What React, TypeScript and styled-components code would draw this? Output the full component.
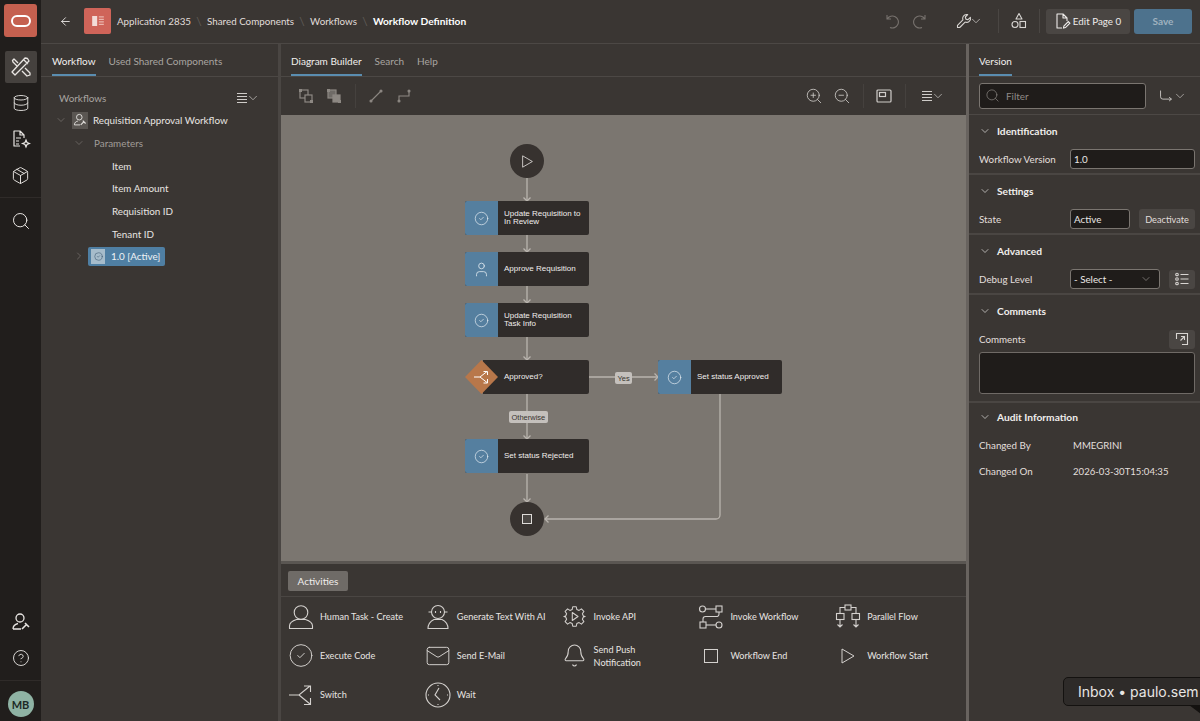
import React from 'react';
import styled, { createGlobalStyle } from 'styled-components';
import {
  ArrowLeft,
  Bell,
  ChevronDown,
  ChevronRight,
  CircleCheck,
  CircleHelp,
  Database,
  Mail,
  Package,
  Search,
  User,
  ZoomIn,
  ZoomOut,
} from 'lucide-react';

const GlobalStyle = createGlobalStyle`
  html, body { margin: 0; padding: 0; background: #3a3633; }
  body { font-family: Lato, "Noto Sans", "Liberation Sans", sans-serif; color: #e8e5e2; }
  * { box-sizing: border-box; }
`;

const MenuLines = ({ size = 14 }: { size?: number }) => (
  <svg width={size} height={size} viewBox="0 0 14 14" fill="none" stroke="currentColor" strokeWidth="1.1">
    <path d="M2 2.5h10M2 5.5h10M2 8.5h10M2 11.5h10" />
  </svg>
);

const ToolsIcon = () => (
  <svg width="22" height="22" viewBox="0 0 22 22" fill="none" stroke="currentColor" strokeWidth="1.3">
    <path d="M3 17l2 2 14-14-1.5-2.5L15 2 2 16z M14 4l4 4" strokeLinejoin="round" />
    <path d="M8 7L4 3 2.5 4.5 3 6l4 4M12 15l5 5 3-1 0-2-5-5" strokeLinejoin="round" />
  </svg>
);

const FileSpark = () => (
  <svg width="20" height="20" viewBox="0 0 20 20" fill="none" stroke="currentColor" strokeWidth="1.2">
    <path d="M9 17H3V2h6l4 4v3M9 2v4h4M5 9h5M5 12h3M5 15h3" strokeLinejoin="round" />
    <path d="M15 11l1 2.500 2.500 1-2.500 1-1 2.500-1-2.500-2.500-1 2.500-1z" />
  </svg>
);

const UserWrench = ({ size = 20 }: { size?: number }) => (
  <svg width={size} height={size} viewBox="0 0 20 20" fill="none" stroke="currentColor" strokeWidth="1.3">
    <circle cx="9" cy="6" r="4" />
    <path d="M2 17c0-4 3-5 5-5.5M2 17h8" />
    <path d="M11 17l5-5M14 11l4 4" strokeWidth="1.6" />
  </svg>
);

const OracleMark = () => (
  <svg width="20" height="12" viewBox="0 0 20 12" fill="none" stroke="#fff" strokeWidth="2">
    <rect x="1" y="1" width="18" height="10" rx="5" />
  </svg>
);

const AppGlyph = () => (
  <svg width="12" height="10" viewBox="0 0 14 12">
    <rect x="0" y="0" width="6" height="12" fill="#f3dcd8" />
    <path d="M8 1h6M8 4h6M8 7h6M8 10h6" stroke="#eab5ad" strokeWidth="1.6" />
  </svg>
);

const UndoArc = ({ flip }: { flip?: boolean }) => (
  <svg width="16" height="16" viewBox="0 0 16 16" fill="none" stroke="currentColor" strokeWidth="1.1"
    style={flip ? { transform: 'scaleX(-1)' } : undefined}>
    <path d="M3 2v4h4M3.2 6A6 6 0 1 1 6 14.5" />
  </svg>
);

const WrenchGlyph = () => (
  <svg width="16" height="16" viewBox="0 0 16 16" fill="none" stroke="currentColor" strokeWidth="1.1">
    <path d="M10.5 1.5a4 4 0 0 0-3.6 5.4L1.5 12.3v2.2h2.2l5.4-5.4a4 4 0 0 0 5.3-4.8l-2.4 2.4-2.1-.6-.6-2.1 2.4-2.4z" strokeLinejoin="round" />
  </svg>
);

const ShapesGlyph = () => (
  <svg width="16" height="18" viewBox="0 0 16 18" fill="none" stroke="currentColor" strokeWidth="1.1">
    <path d="M8 1.5L11 7H5z" strokeLinejoin="round" />
    <circle cx="4" cy="12.5" r="3" />
    <rect x="9" y="9.5" width="5.5" height="6" />
  </svg>
);

const FilePencil = () => (
  <svg width="16" height="18" viewBox="0 0 16 18" fill="none" stroke="currentColor" strokeWidth="1.1">
    <path d="M7 16H2V2h6l4 4v3M8 2v4h4" strokeLinejoin="round" />
    <path d="M8.5 16l.4-2 4.4-4.4 1.6 1.6-4.4 4.4z" />
  </svg>
);

const SelectBoth = ({ filled }: { filled?: boolean }) => (
  <svg width="16" height="16" viewBox="0 0 16 16" fill="none" stroke="currentColor" strokeWidth="1.2">
    <rect x="2" y="2" width="8" height="8" fill={filled ? '#6f6b67' : 'none'} />
    <rect x="7" y="7" width="7" height="7" fill={filled ? '#8d8883' : '#3a3633'} />
    <rect x="1" y="1" width="3" height="3" fill="#8d8883" stroke="none" />
    <rect x="12" y="12" width="3" height="3" fill="#8d8883" stroke="none" />
  </svg>
);

const LineStraight = () => (
  <svg width="16" height="16" viewBox="0 0 16 16" fill="none" stroke="currentColor" strokeWidth="1.1">
    <path d="M3 13L13 3" />
    <circle cx="3" cy="13" r="1" fill="currentColor" />
    <circle cx="13" cy="3" r="1" fill="currentColor" />
  </svg>
);

const LineElbow = () => (
  <svg width="16" height="16" viewBox="0 0 16 16" fill="none" stroke="currentColor" strokeWidth="1.1">
    <path d="M3 13V8h10V3" />
    <circle cx="3" cy="13" r="1" fill="currentColor" />
    <circle cx="13" cy="3" r="1" fill="currentColor" />
  </svg>
);

const Overview = () => (
  <svg width="16" height="14" viewBox="0 0 16 14" fill="none" stroke="currentColor" strokeWidth="1.2">
    <rect x="1" y="1" width="14" height="12" rx="1" />
    <rect x="3.5" y="3.5" width="6" height="4" />
  </svg>
);

const RouteGlyph = () => (
  <svg width="14" height="14" viewBox="0 0 18 16" fill="none" stroke="currentColor" strokeWidth="1.2">
    <path d="M2 1v8a3 3 0 0 0 3 3h11M13 9.500l3 2.500-3 2.500" />
  </svg>
);

const SwitchGlyph = ({ size = 26 }: { size?: number }) => (
  <svg width={size} height={size} viewBox="0 0 26 26" fill="none" stroke="currentColor" strokeWidth="1.1">
    <path d="M1 13h10l11-9M11 13l11 9M16 4h6.500v6M22.500 16v6.500H16" />
  </svg>
);

const PersonGlyph = () => (
  <svg width="26" height="26" viewBox="0 0 26 26" fill="none" stroke="currentColor" strokeWidth="1.1">
    <circle cx="13" cy="8.500" r="6.800" />
    <path d="M1.500 24.500v-2.500c0-3.500 4-5.500 7-6.500h9c3 1 7 3 7 6.500v2.500z" strokeLinejoin="round" />
  </svg>
);

const RobotGlyph = () => (
  <svg width="26" height="26" viewBox="0 0 26 26" fill="none" stroke="currentColor" strokeWidth="1.1">
    <circle cx="13" cy="8" r="6.500" />
    <path d="M3.500 8h3M19.500 8h3M10.500 7v2M15.500 7v2" />
    <path d="M3 24.500c0-5 4-8 6-9h8c2 1 6 4 6 9z" strokeLinejoin="round" />
  </svg>
);

const GearPlay = () => (
  <svg width="23" height="23" viewBox="0 0 26 26" fill="none" stroke="currentColor" strokeWidth="1.2">
    <path d="M11 2h4l.6 3 2.600 1.100 2.600-1.700 2.800 2.800-1.700 2.600L23 12.400l2 .6v0l-2 .6-1.100 2.600 1.700 2.600-2.800 2.800-2.600-1.700-2.600 1.100L15 24h-4l-.6-3-2.600-1.100-2.600 1.700-2.800-2.800 1.700-2.600L3 13.600 1 13l2-.6 1.100-2.600-1.700-2.600 2.800-2.800 2.600 1.700 2.600-1.100z" strokeLinejoin="round" />
    <path d="M10.500 8.500l6.500 4.500-6.500 4.500z" strokeLinejoin="round" />
  </svg>
);

const InvokeFlow = () => (
  <svg width="26" height="26" viewBox="0 0 26 26" fill="none" stroke="currentColor" strokeWidth="1.1">
    <circle cx="4.500" cy="5" r="3" />
    <path d="M7.500 5H18" />
    <rect x="18" y="2" width="6" height="6" />
    <path d="M21 8v2a2.500 2.500 0 0 1-2.500 2.500H7.500A2.500 2.500 0 0 0 5 15v3" />
    <rect x="2" y="18" width="6" height="6" />
    <path d="M8 21h10" />
    <circle cx="21" cy="21" r="3" />
  </svg>
);

const ParallelFlow = () => (
  <svg width="26" height="26" viewBox="0 0 26 26" fill="none" stroke="currentColor" strokeWidth="1.1">
    <rect x="10" y="1" width="6" height="5" />
    <path d="M10 3.500H5v6M16 3.500h5v6" />
    <rect x="1.500" y="9.500" width="7.500" height="6" />
    <rect x="17" y="9.500" width="7.500" height="6" />
    <path d="M5 15.500V23M2.500 20.500L5 23l2.500-2.500M21 15.500V23M18.500 20.500L21 23l2.500-2.500" />
  </svg>
);

const ClockGlyph = () => (
  <svg width="26" height="26" viewBox="0 0 26 26" fill="none" stroke="currentColor" strokeWidth="1.1">
    <circle cx="13" cy="13" r="12" />
    <path d="M14 6l-4 7 5 5" />
    <path d="M13 3v1M13 22v1M3 13h1M22 13h1" />
  </svg>
);

const ExpandBox = () => (
  <svg width="14" height="14" viewBox="0 0 14 14" fill="none" stroke="currentColor" strokeWidth="1.1">
    <path d="M1.500 7V1.500h11v11H7M5.500 8.500l4-4M6 4.500h3.500V8" />
  </svg>
);

const ListLines = () => (
  <svg width="14" height="14" viewBox="0 0 14 14" fill="none" stroke="currentColor" strokeWidth="1.1">
    <circle cx="2" cy="2.500" r="1.300" />
    <circle cx="2" cy="7" r="1.300" />
    <circle cx="2" cy="11.500" r="1.300" />
    <path d="M5.500 2.500h8M5.500 7h8M5.500 11.500h8" />
  </svg>
);

const NodeDecision = () => (
  <svg width="16" height="14" viewBox="0 0 16 14" fill="none" stroke="#fff" strokeWidth="1">
    <path d="M0 7h6l7-5.500M6 7l7 5.500M9.500 1.500h4v3.500M13.500 9v4h-4" />
  </svg>
);

function Square14() {
  return (
    <svg width="14" height="14" viewBox="0 0 14 14" fill="none" stroke="currentColor" strokeWidth="1">
      <rect x="0.500" y="0.500" width="13" height="13" />
    </svg>
  );
}

function PlayOutline({ size }: { size: number }) {
  return (
    <svg width={size} height={size} viewBox="0 0 14 16" fill="none" stroke="currentColor" strokeWidth="1">
      <path d="M1 1l12 7-12 7z" strokeLinejoin="round" />
    </svg>
  );
}

const activities: { icon: React.ReactNode; label: React.ReactNode }[] = [
  { icon: <PersonGlyph />, label: 'Human Task - Create' },
  { icon: <RobotGlyph />, label: 'Generate Text With AI' },
  { icon: <GearPlay />, label: 'Invoke API' },
  { icon: <InvokeFlow />, label: 'Invoke Workflow' },
  { icon: <ParallelFlow />, label: 'Parallel Flow' },
  { icon: <CircleCheck size={27} strokeWidth={0.9} />, label: 'Execute Code' },
  { icon: <Mail size={28} strokeWidth={0.9} />, label: 'Send E-Mail' },
  { icon: <Bell size={25} strokeWidth={1} />, label: <>Send Push<br />Notification</> },
  { icon: <Square14 />, label: 'Workflow End' },
  { icon: <PlayOutline size={16} />, label: 'Workflow Start' },
  { icon: <SwitchGlyph />, label: 'Switch' },
  { icon: <ClockGlyph />, label: 'Wait' },
];

const Arrow = ({ x, y, dir }: { x: number; y: number; dir: 'down' | 'right' | 'left' }) => {
  const d =
    dir === 'down'
      ? `M${x - 3.500} ${y - 3.500}L${x} ${y}L${x + 3.500} ${y - 3.500}`
      : dir === 'right'
        ? `M${x - 3.500} ${y - 3.500}L${x} ${y}L${x - 3.500} ${y + 3.500}`
        : `M${x + 3.500} ${y - 3.500}L${x} ${y}L${x + 3.500} ${y + 3.500}`;
  return <path d={d} />;
};

export default function App() {
  return (
    <>
      <GlobalStyle />
      <Page>
        <Rail>
          <LogoBox><OracleMark /></LogoBox>
          <RailActive><ToolsIcon /></RailActive>
          <RailGroup>
            <RailIcon><Database size={18} strokeWidth={1.2} /></RailIcon>
            <RailIcon><FileSpark /></RailIcon>
            <RailIcon><Package size={19} strokeWidth={1.2} /></RailIcon>
          </RailGroup>
          <RailLine />
          <RailSearch><Search size={20} strokeWidth={1.2} /></RailSearch>
          <RailBottom>
            <RailIcon><UserWrench /></RailIcon>
            <RailIcon><CircleHelp size={18} strokeWidth={1.2} /></RailIcon>
            <RailLine />
            <Avatar>MB</Avatar>
          </RailBottom>
        </Rail>

        <Main>
          <TopBar>
            <BackButton><ArrowLeft size={13} strokeWidth={1.6} /></BackButton>
            <AppBadge><AppGlyph /></AppBadge>
            <Crumb>Application 2835</Crumb>
            <CrumbSlash>\</CrumbSlash>
            <Crumb>Shared Components</Crumb>
            <CrumbSlash>\</CrumbSlash>
            <Crumb>Workflows</Crumb>
            <CrumbSlash>\</CrumbSlash>
            <Crumb $current>Workflow Definition</Crumb>
            <TopActions>
              <DimIcon><UndoArc /></DimIcon>
              <DimIcon><UndoArc flip /></DimIcon>
              <WrenchMenu><WrenchGlyph /><ChevronDown size={14} strokeWidth={1.2} /></WrenchMenu>
              <TopDivider />
              <ShapesSlot><ShapesGlyph /></ShapesSlot>
              <TopDivider />
              <EditButton><FilePencil />Edit Page 0</EditButton>
              <SaveButton>Save</SaveButton>
            </TopActions>
          </TopBar>

          <Workspace>
            <LeftPanel>
              <LeftTabs>
                <Tab $active>Workflow</Tab>
                <Tab>Used Shared Components</Tab>
              </LeftTabs>
              <Tree>
                <TreeHead>
                  <span>Workflows</span>
                  <TreeMenu><MenuLines /><ChevronDown size={14} strokeWidth={1.2} /></TreeMenu>
                </TreeHead>
                <TreeRow $indent={14}>
                  <Twist $w={17}><ChevronDown size={12} strokeWidth={1.1} /></Twist>
                  <TreeBadge><UserWrench size={14} /></TreeBadge>
                  <TreeText>Requisition Approval Workflow</TreeText>
                </TreeRow>
                <TreeRow $indent={32}>
                  <Twist $w={21}><ChevronDown size={12} strokeWidth={1.1} /></Twist>
                  <TreeText $muted>Parameters</TreeText>
                </TreeRow>
                <TreeRow $indent={71}><TreeText>Item</TreeText></TreeRow>
                <TreeRow $indent={71}><TreeText>Item Amount</TreeText></TreeRow>
                <TreeRow $indent={71}><TreeText>Requisition ID</TreeText></TreeRow>
                <TreeRow $indent={71}><TreeText>Tenant ID</TreeText></TreeRow>
                <TreeRow $indent={32}>
                  <Twist $w={15}><ChevronRight size={12} strokeWidth={1.1} /></Twist>
                  <SelectedPill>
                    <PillIcon><CircleCheck size={9} strokeWidth={1.4} /></PillIcon>
                    1.0 [Active]
                  </SelectedPill>
                </TreeRow>
              </Tree>
            </LeftPanel>

            <Splitter />

            <Center>
              <TabRow>
                <Tab $active>Diagram Builder</Tab>
                <Tab>Search</Tab>
                <Tab>Help</Tab>
              </TabRow>
              <Toolbar>
                <ToolGroup>
                  <ToolIcon><SelectBoth /></ToolIcon>
                  <ToolIcon><SelectBoth filled /></ToolIcon>
                </ToolGroup>
                <ToolDivider />
                <ToolGroup>
                  <ToolIcon><LineStraight /></ToolIcon>
                  <ToolIcon><LineElbow /></ToolIcon>
                </ToolGroup>
                <ToolSpacer />
                <ToolGroup>
                  <ToolIcon $bright><ZoomIn size={18} strokeWidth={1.1} /></ToolIcon>
                  <ToolIcon $bright><ZoomOut size={18} strokeWidth={1.1} /></ToolIcon>
                </ToolGroup>
                <ToolDivider />
                <ToolIcon $bright><Overview /></ToolIcon>
                <ToolDivider />
                <ToolMenu><MenuLines /><ChevronDown size={14} strokeWidth={1.2} /></ToolMenu>
              </Toolbar>

              <Canvas>
                <Wires viewBox="281 115 685 446" fill="none" stroke="#b9b4ae" strokeWidth="1.300">
                  <path d="M527 178V201M527 235V252M527 286V303M527 337V360M527 394V439M527 474V502" />
                  <Arrow x={527} y={201} dir="down" />
                  <Arrow x={527} y={252} dir="down" />
                  <Arrow x={527} y={303} dir="down" />
                  <Arrow x={527} y={360} dir="down" />
                  <Arrow x={527} y={439} dir="down" />
                  <Arrow x={527} y={502} dir="down" />
                  <path d="M589 377H658" />
                  <Arrow x={658} y={377} dir="right" />
                  <path d="M720 394V515a4 4 0 0 1-4 4H545" />
                  <Arrow x={545} y={519} dir="left" />
                </Wires>

                <Terminal $x={229} $y={29}><PlayOutline size={13} /></Terminal>
                <Terminal $x={229} $y={387}><TerminalStop /></Terminal>

                <Node $x={184} $y={86}>
                  <NodeIcon><CircleCheck size={15} strokeWidth={1.1} /></NodeIcon>
                  <NodeLabel>Update Requisition to<br />In Review</NodeLabel>
                </Node>
                <Node $x={184} $y={137}>
                  <NodeIcon><User size={17} strokeWidth={1.1} /></NodeIcon>
                  <NodeLabel>Approve Requisition</NodeLabel>
                </Node>
                <Node $x={184} $y={188}>
                  <NodeIcon><CircleCheck size={15} strokeWidth={1.1} /></NodeIcon>
                  <NodeLabel>Update Requisition<br />Task Info</NodeLabel>
                </Node>
                <Node $x={184} $y={245} $decision>
                  <DecisionIcon><NodeDecision /></DecisionIcon>
                  <NodeLabel>Approved?</NodeLabel>
                </Node>
                <Node $x={377} $y={245}>
                  <NodeIcon><CircleCheck size={15} strokeWidth={1.1} /></NodeIcon>
                  <NodeLabel>Set status Approved</NodeLabel>
                </Node>
                <Node $x={184} $y={324}>
                  <NodeIcon><CircleCheck size={15} strokeWidth={1.1} /></NodeIcon>
                  <NodeLabel>Set status Rejected</NodeLabel>
                </Node>

                <EdgeLabel $x={334} $y={257}>Yes</EdgeLabel>
                <EdgeLabel $x={228} $y={296}>Otherwise</EdgeLabel>
              </Canvas>

              <Palette>
                <PaletteTabs><PaletteTab>Activities</PaletteTab></PaletteTabs>
                <PaletteGrid>
                  {activities.map((a, i) => (
                    <Activity key={i}>
                      <ActivityIcon>{a.icon}</ActivityIcon>
                      <ActivityLabel>{a.label}</ActivityLabel>
                    </Activity>
                  ))}
                </PaletteGrid>
              </Palette>
            </Center>

            <SplitterLight />

            <RightPanel>
              <TabRow>
                <Tab $active>Version</Tab>
              </TabRow>
              <FilterRow>
                <FilterBox>
                  <Search size={15} strokeWidth={1.1} />
                  <span>Filter</span>
                </FilterBox>
                <RouteMenu><RouteGlyph /><ChevronDown size={14} strokeWidth={1.2} /></RouteMenu>
              </FilterRow>

              <Section>
                <SectionHead><ChevronDown size={12} strokeWidth={1.3} />Identification</SectionHead>
                <PropRow>
                  <PropLabel>Workflow Version</PropLabel>
                  <Field $grow>1.0</Field>
                </PropRow>
              </Section>
              <Section>
                <SectionHead><ChevronDown size={12} strokeWidth={1.3} />Settings</SectionHead>
                <PropRow>
                  <PropLabel>State</PropLabel>
                  <Field $w={60}>Active</Field>
                  <GhostButton>Deactivate</GhostButton>
                </PropRow>
              </Section>
              <Section>
                <SectionHead><ChevronDown size={12} strokeWidth={1.3} />Advanced</SectionHead>
                <PropRow>
                  <PropLabel>Debug Level</PropLabel>
                  <Field $w={90}>- Select -<FieldChevron><ChevronDown size={12} strokeWidth={1.2} /></FieldChevron></Field>
                  <SquareButton><ListLines /></SquareButton>
                </PropRow>
              </Section>
              <CommentsSection>
                <SectionHead><ChevronDown size={12} strokeWidth={1.3} />Comments</SectionHead>
                <CommentHead>
                  <PropLabel>Comments</PropLabel>
                  <SquareButton><ExpandBox /></SquareButton>
                </CommentHead>
                <CommentBox />
              </CommentsSection>
              <AuditSection>
                <SectionHead><ChevronDown size={12} strokeWidth={1.3} />Audit Information</SectionHead>
                <AuditRow><PropLabel>Changed By</PropLabel><AuditValue>MMEGRINI</AuditValue></AuditRow>
                <AuditRow><PropLabel>Changed On</PropLabel><AuditValue>2026-03-30T15:04:35</AuditValue></AuditRow>
              </AuditSection>
            </RightPanel>
          </Workspace>
        </Main>

        <InboxTip>Inbox • paulo.sem</InboxTip>
      </Page>
    </>
  );
}

const Page = styled.div`
  position: relative;
  display: flex;
  width: 1200px;
  height: 721px;
  overflow: hidden;
  background: #3a3633;
  font-size: 9.900px;
`;

const Rail = styled.div`
  width: 41px;
  flex: none;
  display: flex;
  flex-direction: column;
  align-items: center;
  background: #211e1c;
  color: #e8e5e2;
  padding-top: 4px;
`;

const LogoBox = styled.div`
  width: 33px;
  height: 33px;
  border-radius: 3px;
  display: flex;
  align-items: center;
  justify-content: center;
  background: #c5604f;
`;

const RailActive = styled.div`
  width: 32px;
  height: 32px;
  margin-top: 14px;
  border-radius: 2px;
  display: flex;
  align-items: center;
  justify-content: center;
  background: #45413e;
`;

const RailGroup = styled.div`
  display: flex;
  flex-direction: column;
  margin-top: 2px;
`;

const RailIcon = styled.div`
  width: 36px;
  height: 36px;
  display: flex;
  align-items: center;
  justify-content: center;
`;

const RailLine = styled.div`
  width: 100%;
  height: 1px;
  margin-top: 4px;
  background: #2f2b29;
`;

const RailSearch = styled(RailIcon)`
  margin-top: 5px;
`;

const RailBottom = styled.div`
  margin-top: auto;
  width: 100%;
  display: flex;
  flex-direction: column;
  align-items: center;
  padding-bottom: 4px;
`;

const Avatar = styled.div`
  width: 26px;
  height: 26px;
  margin-top: 10px;
  border-radius: 50%;
  display: flex;
  align-items: center;
  justify-content: center;
  background: #8fb3a4;
  color: #1d2a26;
  font-size: 11px;
  font-weight: 700;
`;

const Main = styled.div`
  flex: 1;
  min-width: 0;
  display: flex;
  flex-direction: column;
`;

const TopBar = styled.div`
  height: 44px;
  flex: none;
  display: flex;
  align-items: center;
  padding: 0 8px 1px 18px;
  border-bottom: 1px solid #4c4845;
  background: #3a3633;
`;

const BackButton = styled.div`
  width: 13px;
  display: flex;
  color: #f0eeec;
`;

const AppBadge = styled.div`
  width: 27px;
  height: 26px;
  margin: 0 6px 0 12px;
  border-radius: 2px;
  display: flex;
  align-items: center;
  justify-content: center;
  background: #cf6459;
`;

const Crumb = styled.span<{ $current?: boolean }>`
  font-size: ${({ $current }) => ($current ? '10.200px' : '9.800px')};
  color: ${({ $current }) => ($current ? '#fff' : '#e0ddda')};
  font-weight: ${({ $current }) => ($current ? 700 : 400)};
`;

const CrumbSlash = styled.span`
  width: 16px;
  text-align: center;
  color: #5f5b57;
  font-size: 12px;
`;

const TopActions = styled.div`
  margin-left: auto;
  display: flex;
  align-items: center;
`;

const DimIcon = styled.div`
  width: 28px;
  display: flex;
  justify-content: center;
  color: #77726e;
`;

const WrenchMenu = styled.div`
  margin: 0 15px 0 22px;
  display: flex;
  align-items: center;
  color: #d8d5d2;
  & > svg:last-child { margin-left: -3px; }
`;

const TopDivider = styled.div`
  width: 1px;
  height: 24px;
  background: #4a4643;
`;

const ShapesSlot = styled.div`
  width: 40px;
  display: flex;
  justify-content: center;
  color: #d8d5d2;
`;

const EditButton = styled.div`
  width: 84px;
  height: 25px;
  margin-left: 6px;
  border-radius: 3px;
  display: flex;
  align-items: center;
  justify-content: center;
  gap: 2px;
  background: #4a4643;
  color: #eeecea;
  font-size: 9.800px;
`;

const SaveButton = styled.div`
  width: 58px;
  height: 25px;
  margin-left: 4px;
  border-radius: 3px;
  display: flex;
  align-items: center;
  justify-content: center;
  background: #4d728d;
  color: #9fb1bf;
  font-weight: 700;
  font-size: 10px;
`;

const Workspace = styled.div`
  flex: 1;
  min-height: 0;
  display: flex;
`;

const LeftPanel = styled.div`
  width: 237px;
  flex: none;
  display: flex;
  flex-direction: column;
`;

const Splitter = styled.div`
  width: 3px;
  flex: none;
  background: #4a4643;
`;

const SplitterLight = styled(Splitter)`
  background: #68635f;
`;

const TabRow = styled.div`
  height: 33px;
  flex: none;
  display: flex;
  gap: 13px;
  padding-left: 10px;
  border-bottom: 1px solid #4c4845;
`;

const LeftTabs = styled(TabRow)`
  padding-left: 11px;
`;

const Tab = styled.div<{ $active?: boolean }>`
  height: 32px;
  padding-top: 10px;
  line-height: 14px;
  font-size: 10px;
  color: ${({ $active }) => ($active ? '#f2f0ee' : '#a9a5a1')};
  border-bottom: 2px solid ${({ $active }) => ($active ? '#5a8db0' : 'transparent')};
`;

const Tree = styled.div`
  padding-top: 10px;
  display: flex;
  flex-direction: column;
`;

const TreeHead = styled.div`
  height: 22px;
  display: flex;
  align-items: center;
  justify-content: space-between;
  padding: 0 18px 0 18px;
  color: #a9a5a1;
`;

const TreeMenu = styled.div`
  display: flex;
  align-items: center;
  color: #cfccc9;
  & > svg:last-child { margin-left: -3px; }
`;

const TreeRow = styled.div<{ $indent: number }>`
  height: 22.700px;
  display: flex;
  align-items: center;
  padding-left: ${({ $indent }) => $indent}px;
`;

const Twist = styled.div<{ $w: number }>`
  width: ${({ $w }) => $w}px;
  flex: none;
  display: flex;
  color: #8b8682;
`;

const TreeBadge = styled.div`
  width: 16px;
  height: 17px;
  margin-right: 5px;
  display: flex;
  align-items: center;
  justify-content: center;
  background: #5a5652;
  color: #e6e3e0;
`;

const TreeText = styled.span<{ $muted?: boolean }>`
  color: ${({ $muted }) => ($muted ? '#a09c98' : '#e8e5e2')};
`;

const SelectedPill = styled.div`
  width: 77px;
  height: 19px;
  padding-left: 3px;
  border-radius: 2px;
  display: flex;
  align-items: center;
  gap: 6px;
  background: #4f7fa3;
  color: #f0f3f5;
`;

const PillIcon = styled.div`
  width: 14px;
  height: 15px;
  display: flex;
  align-items: center;
  justify-content: center;
  background: #a6bccb;
  color: #33506a;
`;

const Center = styled.div`
  width: 685px;
  flex: none;
  display: flex;
  flex-direction: column;
`;

const Toolbar = styled.div`
  height: 38px;
  flex: none;
  display: flex;
  align-items: center;
  padding: 0 21px 0 17px;
`;

const ToolGroup = styled.div`
  display: flex;
  gap: 12px;
`;

const ToolIcon = styled.div<{ $bright?: boolean }>`
  width: 16px;
  height: 16px;
  display: flex;
  align-items: center;
  justify-content: center;
  color: ${({ $bright }) => ($bright ? '#d0cdca' : '#8d8883')};
  & > svg { flex: none; }
`;

const ToolDivider = styled.div`
  width: 1px;
  height: 24px;
  margin: 0 12px 0 13px;
  background: #45413e;
`;

const ToolSpacer = styled.div`
  flex: 1;
`;

const ToolMenu = styled.div`
  margin-left: 2px;
  display: flex;
  align-items: center;
  color: #cfccc9;
  & > svg:last-child { margin-left: -3px; }
`;

const Canvas = styled.div`
  position: relative;
  height: 446px;
  flex: none;
  background: #7b7670;
  overflow: hidden;
`;

const Wires = styled.svg`
  position: absolute;
  inset: 0;
  width: 685px;
  height: 446px;
`;

const Terminal = styled.div<{ $x: number; $y: number }>`
  position: absolute;
  left: ${({ $x }) => $x}px;
  top: ${({ $y }) => $y}px;
  width: 34px;
  height: 34px;
  border-radius: 50%;
  display: flex;
  align-items: center;
  justify-content: center;
  background: #37322f;
  color: #e6e3e0;
`;

const TerminalStop = styled.div`
  width: 10px;
  height: 10px;
  border: 1px solid #dedbd8;
  background: #4a4643;
`;

const Node = styled.div<{ $x: number; $y: number; $decision?: boolean }>`
  position: absolute;
  left: ${({ $x }) => $x}px;
  top: ${({ $y }) => $y}px;
  width: 124px;
  height: 34px;
  display: flex;
  border-radius: 2px;
  background: ${({ $decision }) =>
    $decision ? 'linear-gradient(to right, transparent 18px, #302c2a 18px)' : '#302c2a'};
`;

const NodeIcon = styled.div`
  width: 33px;
  flex: none;
  display: flex;
  align-items: center;
  justify-content: center;
  background: #557f9f;
  color: #e6eef3;
  border-radius: 2px 0 0 2px;
`;

const DecisionIcon = styled(NodeIcon)`
  background: #b8774a;
  clip-path: polygon(50% 0, 100% 50%, 50% 100%, 0 50%);
  color: #fff;
  border-radius: 0;
`;

const NodeLabel = styled.div`
  padding-left: 6px;
  align-self: center;
  font-family: "Liberation Sans", Arial, sans-serif;
  font-size: 8px;
  line-height: 8px;
  color: #f0eeec;
`;

const EdgeLabel = styled.div<{ $x: number; $y: number }>`
  position: absolute;
  left: ${({ $x }) => $x}px;
  top: ${({ $y }) => $y}px;
  height: 12px;
  padding: 0 2.500px;
  border-radius: 2px;
  display: flex;
  align-items: center;
  background: #c4c0bc;
  color: #38342f;
  font-family: "Liberation Sans", Arial, sans-serif;
  font-size: 7.500px;
`;

const Palette = styled.div`
  flex: 1;
  min-height: 0;
  border-top: 3px solid #5a5652;
`;

const PaletteTabs = styled.div`
  height: 33px;
  padding: 7px 0 0 7px;
  border-bottom: 1px solid #4a4643;
`;

const PaletteTab = styled.div`
  width: 60px;
  height: 20px;
  border-radius: 2px;
  display: flex;
  align-items: center;
  justify-content: center;
  background: #6f6b67;
  color: #f0eeec;
  font-size: 10px;
`;

const PaletteGrid = styled.div`
  display: grid;
  grid-template-columns: repeat(5, 136.800px);
  grid-auto-rows: 39px;
  padding: 0 0 0 7px;
`;

const Activity = styled.div`
  display: flex;
  align-items: center;
  gap: 6px;
`;

const ActivityIcon = styled.div`
  width: 26px;
  flex: none;
  display: flex;
  justify-content: center;
  color: #d4d1ce;
`;

const ActivityLabel = styled.div`
  font-size: 9.100px;
  line-height: 13px;
  color: #e8e5e2;
`;

const RightPanel = styled.div`
  flex: 1;
  min-width: 0;
  display: flex;
  flex-direction: column;
`;

const FilterRow = styled.div`
  height: 38px;
  flex: none;
  display: flex;
  align-items: center;
  padding: 0 0 0 10px;
  border-bottom: 1px solid #4c4845;
`;

const FilterBox = styled.div`
  width: 167px;
  height: 26px;
  padding-left: 5px;
  border: 1px solid #7a7570;
  border-radius: 3px;
  display: flex;
  align-items: center;
  gap: 6px;
  background: #1f1c1a;
  color: #8f8a86;
`;

const RouteMenu = styled.div`
  margin-left: 13px;
  display: flex;
  align-items: center;
  color: #c8c5c2;
  & > svg:last-child { margin-left: 0; }
`;

const Section = styled.div`
  height: 60px;
  flex: none;
  padding: 1px 5px 0 10px;
  border-bottom: 2px solid #4a4643;
`;

const CommentsSection = styled(Section)`
  height: 108px;
`;

const AuditSection = styled(Section)`
  height: auto;
  margin-top: -2px;
  border-bottom: none;
`;

const SectionHead = styled.div`
  height: 30px;
  display: flex;
  align-items: center;
  gap: 6px;
  font-size: 10.200px;
  font-weight: 700;
  color: #f0eeec;
`;

const PropRow = styled.div`
  height: 22px;
  margin-top: 2px;
  display: flex;
  align-items: center;
  font-size: 9.800px;
`;

const PropLabel = styled.div`
  width: 91px;
  flex: none;
  color: #e2dfdc;
  font-size: 9.800px;
`;

const Field = styled.div<{ $grow?: boolean; $w?: number }>`
  flex: ${({ $grow }) => ($grow ? 1 : 'none')};
  width: ${({ $w }) => ($w ? `${$w}px` : 'auto')};
  height: 20px;
  padding: 0 3px;
  border: 1px solid #7a7570;
  border-radius: 3px;
  display: flex;
  align-items: center;
  justify-content: space-between;
  background: #1f1c1a;
  color: #ece9e6;
`;

const FieldChevron = styled.span`
  display: flex;
  padding-right: 4px;
  color: #a9a5a1;
`;

const GhostButton = styled.div`
  width: 56px;
  height: 20px;
  margin-left: 9px;
  border-radius: 3px;
  display: flex;
  align-items: center;
  justify-content: center;
  background: #4a4643;
  color: #e0ddda;
  font-size: 9.200px;
`;

const SquareButton = styled.div`
  width: 26px;
  height: 19px;
  margin-left: auto;
  border-radius: 3px;
  display: flex;
  align-items: center;
  justify-content: center;
  background: #4a4643;
  color: #d8d5d2;
`;

const CommentHead = styled.div`
  height: 18px;
  margin-top: 4px;
  display: flex;
  align-items: center;
`;

const CommentBox = styled.div`
  height: 42px;
  margin-top: 4px;
  border: 1px solid #6f6a66;
  border-radius: 3px;
  background: #1f1c1a;
`;

const AuditRow = styled.div`
  height: 26px;
  display: flex;
  align-items: center;
`;

const AuditValue = styled.div`
  padding-left: 3px;
  color: #e2dfdc;
  font-size: 9.600px;
`;

const InboxTip = styled.div`
  position: absolute;
  left: 1063px;
  top: 677px;
  width: 160px;
  height: 29px;
  padding-left: 14px;
  border: 1px solid #141210;
  border-radius: 5px;
  display: flex;
  align-items: center;
  background: #2e2b29;
  color: #e8e6e4;
  font-family: Inter, "Liberation Sans", sans-serif;
  font-size: 14px;
  white-space: nowrap;

  &::after {
    content: '';
    position: absolute;
    left: 125px;
    top: 27px;
    width: 12px;
    height: 9px;
    background: #141210;
    clip-path: polygon(0 0, 100% 0, 100% 100%);
  }
`;
